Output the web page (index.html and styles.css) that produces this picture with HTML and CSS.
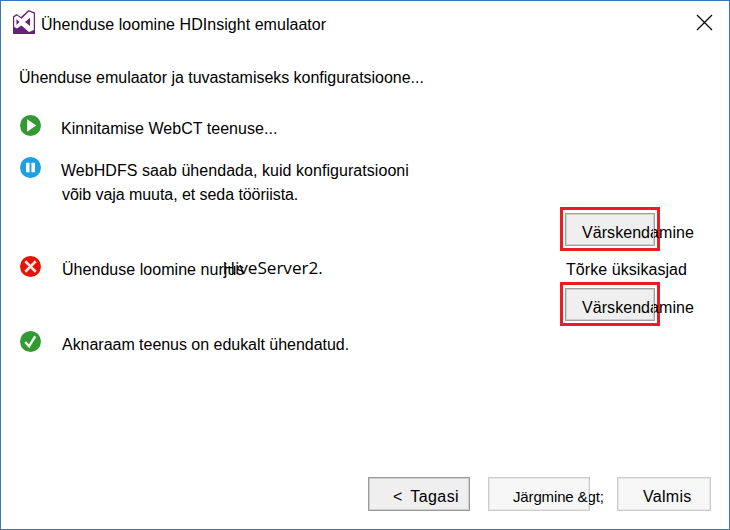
FILE: index.html
```html
<!DOCTYPE html>
<html lang="et">
<head>
<meta charset="utf-8">
<title>Ühenduse loomine HDInsight emulaator</title>
<link rel="stylesheet" href="styles.css">
</head>
<body>
<main class="dialog">
  <header class="titlebar">
    <svg class="logo" width="22" height="24" viewBox="0 0 22 24">
      <path fill="#68217a" fill-rule="evenodd" d="M0 6.5 3.5 4 8 7 15.5 0 22 2.5V24H0ZM1.2 7.3V17L4 18.5 8.5 15.5 16 22 20.8 20V3.4L16 1.4 8.5 8.7 4 5.5ZM3.5 9 6.5 12 3.5 15ZM17 7.8V16L12 12Z"/>
    </svg>
    <h1 class="title">Ühenduse loomine HDInsight emulaator</h1>
    <svg class="close" width="17" height="17" viewBox="0 0 17 17"><path d="M1 1 16 16M16 1 1 16" stroke="#000" stroke-width="1.2"/></svg>
  </header>
  <p class="intro">Ühenduse emulaator ja tuvastamiseks konfiguratsioone...</p>
  <section class="checks">
    <div class="row row-service">
      <svg class="icon" viewBox="0 0 22 22"><circle cx="11" cy="11" r="11" fill="#339933"/><path fill="#fff" d="M7.5 4.5V17.5L17 11Z"/></svg>
      <p class="message service">Kinnitamise WebCT teenuse...</p>
    </div>
    <div class="row row-hdfs">
      <svg class="icon" viewBox="0 0 22 22"><circle cx="11" cy="11" r="11" fill="#1ba1e2"/><path fill="#fff" d="M6.3 6H10V16H6.3ZM12 6H15.7V16H12Z"/></svg>
      <div class="message">
        <p class="hdfs-first">WebHDFS saab ühendada, kuid konfiguratsiooni</p>
        <p class="hdfs-second">võib vaja muuta, et seda tööriista.</p>
      </div>
      <div class="highlight highlight-low"><button class="refresh"><span>Värskendamine</span></button></div>
    </div>
    <div class="row row-hive">
      <svg class="icon" viewBox="0 0 22 22"><circle cx="11" cy="11" r="11" fill="#e51400"/><path d="M5.5 5.5 16.5 16.5M16.5 5.5 5.5 16.5" stroke="#fff" stroke-opacity=".9" stroke-width="2.6"/></svg>
      <p class="message inset"><span class="failed">Ühenduse loomine nurjus</span><span class="server">HiveServer2.</span></p>
      <div class="actions">
        <p class="details">Tõrke üksikasjad</p>
        <div class="highlight"><button class="refresh"><span>Värskendamine</span></button></div>
      </div>
    </div>
    <div class="row">
      <svg class="icon" viewBox="0 0 22 22"><circle cx="11" cy="11" r="11" fill="#339933"/><path d="M5.5 11.5 9.5 16 16 5.5" fill="none" stroke="#fff" stroke-opacity=".9" stroke-width="2.5"/></svg>
      <p class="message inset success">Aknaraam teenus on edukalt ühendatud.</p>
    </div>
  </section>
  <footer class="footer">
    <button class="nav back"><span class="arrow">&lt;</span><span class="back-label">Tagasi</span></button>
    <button class="nav next muted"><span>Järgmine &amp;gt;</span></button>
    <button class="nav finish muted"><span>Valmis</span></button>
  </footer>
</main>
</body>
</html>
```
FILE: styles.css
```css
* { box-sizing: border-box; }
body, p, h1 { margin: 0; }
body {
  font: 16px/24px "Liberation Sans", Arial, sans-serif;
  color: #000;
  background: #fff;
}
.dialog {
  display: flex;
  flex-direction: column;
  width: 730px;
  height: 530px;
  border: 1px solid #3a78b5;
  overflow: hidden;
  white-space: nowrap;
}
.titlebar {
  display: flex;
  align-items: flex-start;
  height: 65px;
  padding: 9px 16px 0 12px;
}
.logo { flex: none; }
.title { margin: 3px 0 0 6px; font-size: 16px; font-weight: 400; letter-spacing: 0.04px; }
.close { margin: 4px 0 0 auto; }
.intro { height: 51px; padding-left: 18px; letter-spacing: -0.03px; }
.checks { flex: 1; }
.row {
  display: grid;
  grid-template-columns: 42px 499px 1fr;
  padding-left: 18px;
}
.row-service { height: 42px; }
.row-hdfs { height: 99px; }
.row-hive { height: 75px; }
.icon { width: 21px; height: 21px; margin: -2px 0 0 1px; }
.inset { padding-left: 1px; }
.service { letter-spacing: 0.03px; }
.hdfs-first { letter-spacing: 0.05px; }
.hdfs-second { padding-left: 1px; letter-spacing: -0.06px; }
.success { letter-spacing: -0.03px; }
.failed { letter-spacing: 0.04px; }
.server {
  font: 17.2px/22px "Open Sans", "Noto Sans", sans-serif;
  letter-spacing: -0.05px;
  margin-left: -22px;
  position: relative;
  top: -1px;
}
.highlight {
  width: 100px;
  height: 44px;
  padding: 3px 2px;
  border: 3px solid #ed1c24;
}
.highlight-low { margin-top: 48px; }
.refresh {
  display: block;
  width: 90px;
  height: 33px;
  padding: 7px 0 0 16px;
  border: 1px solid #a0a0a0;
  outline: 1px solid #d0d0d0;
  outline-offset: -2px;
  background: #efefef;
  color: #000;
  font: inherit;
  line-height: 22px;
  text-align: left;
  white-space: nowrap;
  letter-spacing: 0.06px;
}
.details { height: 24px; padding-left: 6px; letter-spacing: 0.06px; }
.footer {
  display: flex;
  height: 52px;
  padding-left: 367px;
}
.nav {
  width: 102px;
  height: 34px;
  padding: 5px 0 0 24px;
  border: 1px solid #999;
  outline: 1px solid #cfcfcf;
  outline-offset: -2px;
  background: #efefef;
  color: #000;
  font: inherit;
  text-align: left;
  white-space: nowrap;
}
.muted { border-color: #ccc; outline-color: #e8e8e8; background: #f7f7f7; }
.arrow { margin-right: 8px; }
.back-label { letter-spacing: 0.4px; }
.next { margin-left: 18px; font-size: 15px; letter-spacing: -0.14px; }
.finish { width: 94px; margin-left: 27px; padding-left: 25px; letter-spacing: 0.3px; }
```
